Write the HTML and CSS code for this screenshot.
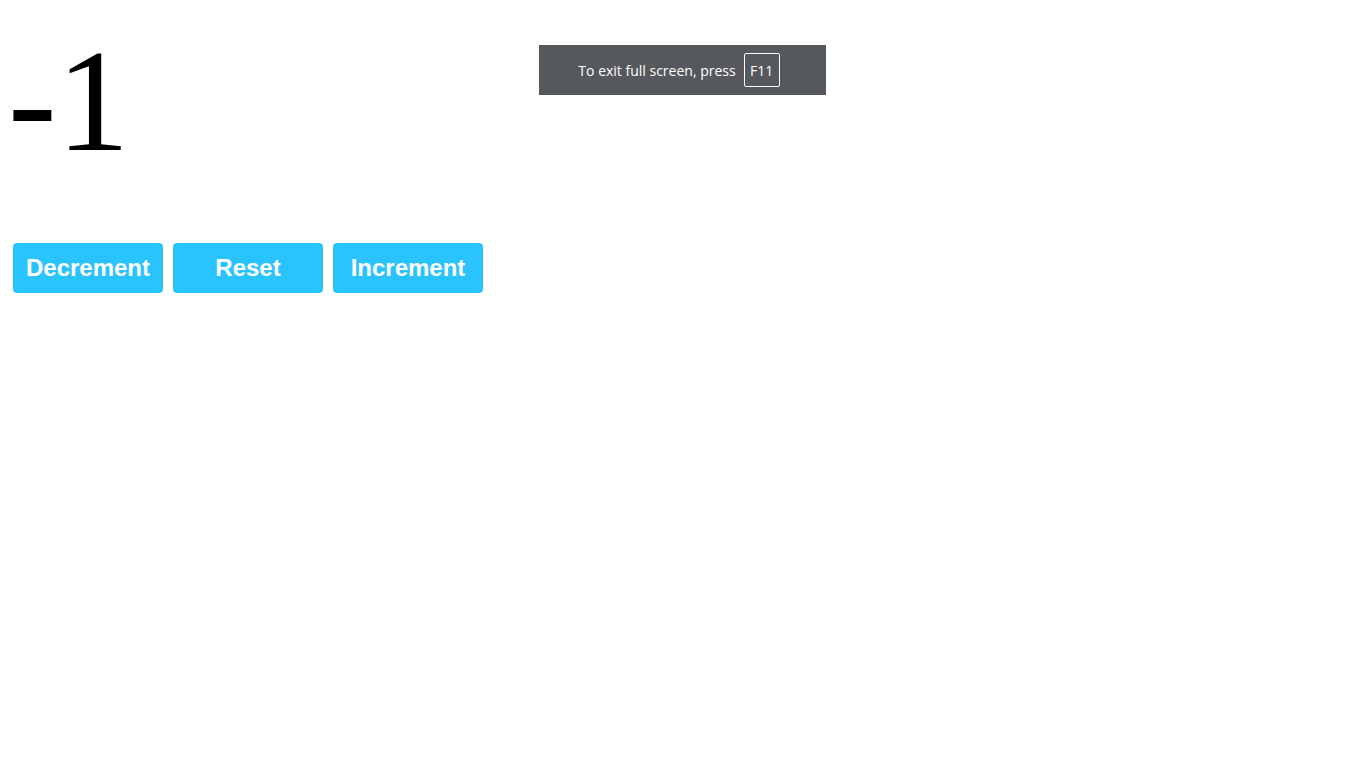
FILE: index.html
```html
<!DOCTYPE html>
<html>
<head>
<meta charset="utf-8">
<link rel="stylesheet" href="styles.css">
</head>
<body>
<div class="count">-1</div>
<div class="controls">
  <button class="btn">Decrement</button>
  <button class="btn">Reset</button>
  <button class="btn">Increment</button>
</div>
<div class="fs-toast">
  <span>To exit full screen, press</span>
  <span class="key">F11</span>
</div>
</body>
</html>
```
FILE: styles.css
```css
html, body {
  background: #ffffff;
}
body {
  margin: 8px;
  font-family: "Liberation Serif", serif;
}
.count {
  font-family: "Liberation Serif", serif;
  font-size: 146px;
  line-height: normal;
  margin-top: 9px;
  color: #000;
}
.controls {
  display: flex;
  margin-top: 53px;
}
.btn {
  width: 150px;
  height: 50px;
  margin: 5px;
  border: none;
  border-radius: 4px;
  background: #29c3ff;
  color: #ffffff;
  font-family: "Liberation Sans", Arial, sans-serif;
  font-weight: bold;
  font-size: 24px;
  padding: 0;
}
.fs-toast {
  position: absolute;
  left: 539px;
  top: 45px;
  width: 287px;
  height: 50px;
  padding-right: 7px;
  background: #55585c;
  color: #ffffff;
  font-family: "Open Sans", "Noto Sans", sans-serif;
  font-size: 14px;
  display: flex;
  align-items: center;
  justify-content: center;
  gap: 8px;
  box-sizing: border-box;
}
.key {
  border: 1px solid #ffffff;
  border-radius: 2px;
  height: 34px;
  width: 36px;
  box-sizing: border-box;
  display: flex;
  align-items: center;
  justify-content: center;
}
```
